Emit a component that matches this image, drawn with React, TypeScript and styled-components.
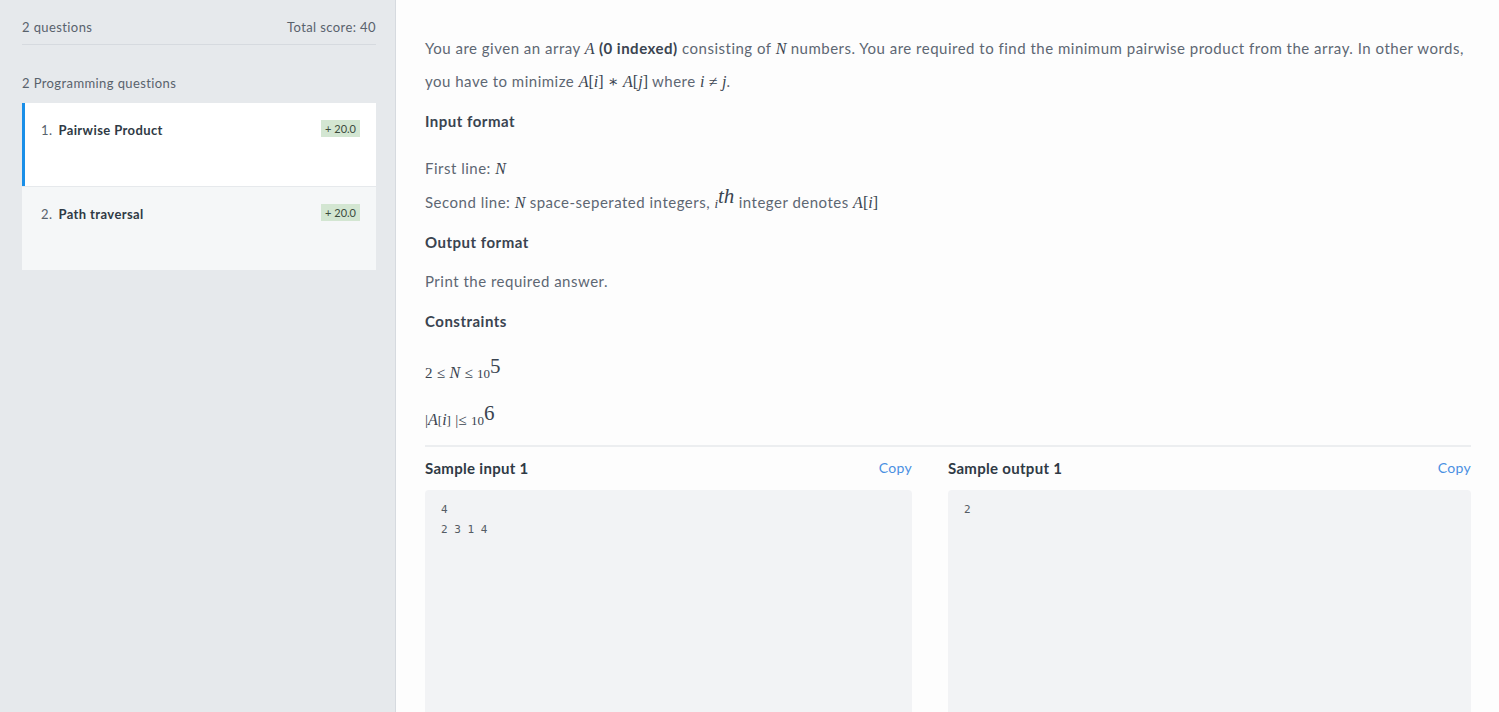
import React from 'react';
import styled, { createGlobalStyle } from 'styled-components';

const GlobalStyle = createGlobalStyle`
    html, body {
        margin: 0;
        padding: 0;
        height: 100%;
        overflow: hidden;
    }
    body {
        font-family: "Lato", "Noto Sans", sans-serif;
        background: #fdfdfd;
    }
`;

const Page = styled.div`
    display: flex;
    height: 100vh;
    overflow: hidden;
`;

// 왼쪽 문제 목록
const Sidebar = styled.aside`
    width: 396px;
    flex-shrink: 0;
    box-sizing: border-box;
    padding: 0 19px 0 22px;
    background: #e6e9ec;
    border-right: 1px solid #d6dadf;
    letter-spacing: 0.4px;
`;
const SideHeader = styled.div`
    display: flex;
    justify-content: space-between;
    align-items: center;
    height: 45px;
    padding-top: 10px;
    box-sizing: border-box;
    border-bottom: 1px solid #d6dadf;
    font-size: 13px;
    color: #59626c;
`;
const GroupTitle = styled.div`
    margin-top: 29px;
    margin-bottom: 11px;
    font-size: 13px;
    line-height: 18px;
    color: #59626c;
`;
const QuestionList = styled.div`
    display: flex;
    flex-direction: column;
    gap: 1px;
`;
const QuestionCard = styled.div<{ $active?: boolean }>`
    display: flex;
    justify-content: space-between;
    align-items: flex-start;
    height: 83px;
    box-sizing: border-box;
    padding: 17px 16px 0 ${p => (p.$active ? '16px' : '19px')};
    background: ${p => (p.$active ? '#ffffff' : '#f5f7f8')};
    border-left: ${p => (p.$active ? '3px solid #1a8fe8' : 'none')};
`;
const QuestionName = styled.div`
    display: flex;
    gap: 6px;
    font-size: 13px;
    line-height: 20px;
    color: #59626c;
    b {
        font-weight: 700;
        color: #2f3a45;
    }
`;
const Badge = styled.span`
    display: inline-block;
    padding: 0 4px;
    height: 17px;
    line-height: 17px;
    font-size: 11px;
    letter-spacing: 0;
    color: #3c4a3c;
    background: #d3e6d2;
`;

// 오른쪽 문제 본문
const Main = styled.main`
    flex: 1;
    min-width: 0;
    padding: 32px 28px 0 29px;
    background: #fdfdfd;
    letter-spacing: 0.5px;
`;
const Para = styled.p<{ $mt?: number }>`
    margin: ${p => p.$mt ?? 0}px 0 0;
    font-size: 15px;
    line-height: 33px;
    color: #5d6773;
    b {
        font-weight: 700;
        color: #3a4450;
    }
`;
const Heading = styled.h4<{ $mt?: number }>`
    margin: ${p => p.$mt ?? 0}px 0 0;
    font-size: 15px;
    line-height: 20px;
    font-weight: 700;
    color: #3a4450;
`;
const Mi = styled.span`
    font-family: "Liberation Serif", "DejaVu Serif", serif;
    font-style: italic;
    font-size: 16px;
    letter-spacing: 0;
    color: #3a4450;
`;
const Mo = styled.span`
    font-family: "Liberation Serif", "DejaVu Serif", serif;
    font-size: 16px;
    letter-spacing: 0;
    color: #3a4450;
`;
const Small = styled.span<{ $size?: number }>`
    font-family: "Liberation Serif", "DejaVu Serif", serif;
    font-size: ${p => p.$size ?? 13}px;
    letter-spacing: 0;
    color: #3a4450;
`;
const Sup = styled.span<{ $italic?: boolean }>`
    font-family: "Liberation Serif", "DejaVu Serif", serif;
    font-style: ${p => (p.$italic ? 'italic' : 'normal')};
    font-size: 21px;
    letter-spacing: 0;
    position: relative;
    top: -5px;
    color: #3a4450;
`;
const Divider = styled.hr`
    margin: 8px 0 0;
    border: none;
    height: 2px;
    background: #eceef0;
`;
const Samples = styled.div`
    display: grid;
    grid-template-columns: 1fr 1fr;
    letter-spacing: 0.3px;
`;
const SampleCol = styled.div<{ $gap?: number }>`
    padding-right: ${p => p.$gap ?? 0}px;
`;
const SampleHead = styled.div`
    display: flex;
    justify-content: space-between;
    align-items: center;
    margin-top: 11px;
    line-height: 20px;
`;
const SampleTitle = styled.span`
    font-size: 15px;
    font-weight: 700;
    color: #2f3a45;
`;
const CopyLink = styled.a`
    font-size: 14px;
    color: #4a90e2;
    cursor: pointer;
`;
const CodeBox = styled.pre`
    margin: 12px 0 0;
    height: 260px;
    padding: 10px 16px;
    border-radius: 4px;
    background: #f2f3f5;
    font-family: "DejaVu Sans Mono", "Liberation Mono", monospace;
    font-size: 11px;
    line-height: 20px;
    letter-spacing: 0;
    color: #555c64;
`;

const questions = [
    { no: 1, title: 'Pairwise Product', score: '+ 20.0' },
    { no: 2, title: 'Path traversal', score: '+ 20.0' },
];

const App = () => {
    return (
        <>
            <GlobalStyle />
            <Page>
                <Sidebar>
                    <SideHeader>
                        <span>2 questions</span>
                        <span>Total score: 40</span>
                    </SideHeader>
                    <GroupTitle>2 Programming questions</GroupTitle>
                    <QuestionList>
                        {questions.map((q, i) => (
                            <QuestionCard key={q.no} $active={i === 0}>
                                <QuestionName>
                                    <span>{q.no}.</span>
                                    <b>{q.title}</b>
                                </QuestionName>
                                <Badge>{q.score}</Badge>
                            </QuestionCard>
                        ))}
                    </QuestionList>
                </Sidebar>
                <Main>
                    <Para>
                        You are given an array <Mi>A</Mi> <b>(0 indexed)</b> consisting of <Mi>N</Mi> numbers. You are required to find the minimum pairwise product from the array. In other words, you have to minimize <Mi>A</Mi><Mo>[</Mo><Mi>i</Mi><Mo>]</Mo> <Mo>∗</Mo> <Mi>A</Mi><Mo>[</Mo><Mi>j</Mi><Mo>]</Mo> where <Mi>i</Mi> <Mo>≠</Mo> <Mi>j</Mi>.
                    </Para>
                    <Heading $mt={13}>Input format</Heading>
                    <Para $mt={21}>First line: <Mi>N</Mi></Para>
                    <Para>
                        Second line: <Mi>N</Mi> space-seperated integers, <Small><i>i</i></Small><Sup $italic>th</Sup> integer denotes <Mi>A</Mi><Mo>[</Mo><Mi>i</Mi><Mo>]</Mo>
                    </Para>
                    <Heading $mt={12}>Output format</Heading>
                    <Para $mt={13}>Print the required answer.</Para>
                    <Heading $mt={13}>Constraints</Heading>
                    <Para $mt={24}>
                        <Small $size={15}>2</Small> <Small $size={15}>≤</Small> <Mi>N</Mi> <Small $size={15}>≤</Small> <Small>10</Small><Sup>5</Sup>
                    </Para>
                    <Para $mt={12}>
                        <Small $size={15}>|</Small><Mi>A</Mi><Small>[</Small><Mi>i</Mi><Small>]</Small> <Small $size={15}>|≤</Small> <Small>10</Small><Sup>6</Sup>
                    </Para>
                    <Divider />
                    <Samples>
                        <SampleCol $gap={36}>
                            <SampleHead>
                                <SampleTitle>Sample input 1</SampleTitle>
                                <CopyLink>Copy</CopyLink>
                            </SampleHead>
                            <CodeBox>{'4\n2 3 1 4'}</CodeBox>
                        </SampleCol>
                        <SampleCol>
                            <SampleHead>
                                <SampleTitle>Sample output 1</SampleTitle>
                                <CopyLink>Copy</CopyLink>
                            </SampleHead>
                            <CodeBox>{'2'}</CodeBox>
                        </SampleCol>
                    </Samples>
                </Main>
            </Page>
        </>
    );
};

export default App;
